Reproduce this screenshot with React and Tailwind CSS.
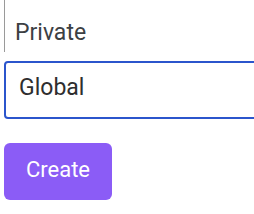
export default function App() {
  return (
    <div className="w-[254px] h-[214px] overflow-hidden bg-white pl-1" style={{ fontFamily: "Roboto, 'Liberation Sans', sans-serif" }}>
      <div className="h-[52px] border-l border-[#9a9a9a] pl-[10px] pt-[21px]">
        <span className="block text-[23px] leading-[23px] text-[#3c4043]">Private</span>
      </div>
      <div className="mt-[9px] w-[300px] h-[58px] border-2 border-[#2b55cc] rounded-[4px] pl-[13px] pt-[13px]">
        <span className="block text-[23px] leading-[23px] text-[#2e2e2e]">Global</span>
      </div>
      <button className="mt-[24px] w-[108px] h-[57px] rounded-[6px] bg-[#8b5cf6] text-white text-[22px] leading-[22px] flex items-start justify-center pt-[16px]">
        Create
      </button>
    </div>
  );
}
